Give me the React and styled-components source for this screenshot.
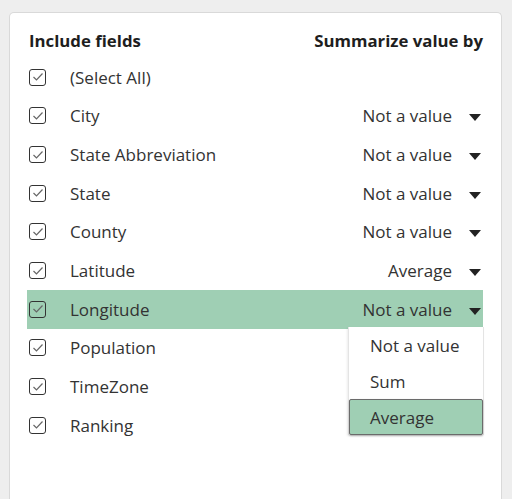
import React from "react";
import styled, { createGlobalStyle } from "styled-components";

const Global = createGlobalStyle`
  html, body { margin: 0; padding: 0; background: #eeeeee; }
  body { font-family: "Open Sans", "Noto Sans", sans-serif; overflow: hidden; }
`;

const GREEN = "#9fcfb4";

const Page = styled.div`
  padding: 12px 10px 0 9px;
  height: 499px;
  box-sizing: border-box;
`;

const Panel = styled.div`
  position: relative;
  background: #fff;
  border: 1px solid #d9d9d9;
  border-bottom: none;
  border-radius: 5px 5px 0 0;
  height: 487px;
  box-sizing: border-box;
  padding: 10px 18px 0 17px;
`;

const Header = styled.div`
  display: flex;
  justify-content: space-between;
  align-items: center;
  height: 35px;
  padding-left: 2px;
  font-weight: 700;
  font-size: 16.8px;
  color: #1e1e1e;
`;

const Row = styled.div`
  display: flex;
  align-items: center;
  height: 38.67px;
  padding-left: 2px;
  background: ${(p) => (p.$active ? GREEN : "transparent")};
  color: #333;
  font-size: 17px;
`;

const Box = styled.span`
  width: 17px;
  height: 17px;
  box-sizing: border-box;
  border: 1.5px solid #333;
  border-radius: 3px;
  display: flex;
  align-items: center;
  justify-content: center;
  flex: none;
`;

const Label = styled.span`
  margin-left: 24px;
`;

const Value = styled.span`
  margin-left: auto;
  display: flex;
  align-items: center;
`;

const Arrow = styled.svg`
  margin-left: 17px;
  margin-right: 2px;
  margin-top: 4px;
`;

const Menu = styled.div`
  position: absolute;
  left: 338px;
  top: 314px;
  width: 134px;
  background: #fff;
  border-left: 1px solid #e4e4e4;
  border-right: 1px solid #e4e4e4;
  box-shadow: -1px 1px 2px rgba(0,0,0,0.08);
`;

const Item = styled.div`
  height: ${(p) => p.$h}px;
  display: flex;
  align-items: center;
  padding-left: 21px;
  font-size: 17px;
  color: #333;
  box-sizing: border-box;
  ${(p) =>
    p.$active &&
    `background: ${GREEN};
     border: 1px solid #6b6b6b;
     border-radius: 2px;
     padding-left: 20px;
     box-shadow: 0 1px 2px rgba(0,0,0,0.3);`}
`;

const Check = () => (
  <Box>
    <svg width="12" height="10" viewBox="0 0 12 10">
      <polyline points="1.5,5 4.5,8 10.5,1.5" fill="none" stroke="#666" strokeWidth="1.2" />
    </svg>
  </Box>
);

const Caret = () => (
  <Arrow width="12" height="7" viewBox="0 0 12 7">
    <polygon points="0,0 12,0 6,7" fill="#222" />
  </Arrow>
);

const fields = [
  ["(Select All)", null],
  ["City", "Not a value"],
  ["State Abbreviation", "Not a value"],
  ["State", "Not a value"],
  ["County", "Not a value"],
  ["Latitude", "Average"],
  ["Longitude", "Not a value", true],
  ["Population", null],
  ["TimeZone", null],
  ["Ranking", null],
];

export default function App() {
  return (
    <Page>
      <Global />
      <Panel>
        <Header>
          <span>Include fields</span>
          <span>Summarize value by</span>
        </Header>
        {fields.map(([name, val, active]) => (
          <Row key={name} $active={active}>
            <Check />
            <Label>{name}</Label>
            {val && (
              <Value>
                {val}
                <Caret />
              </Value>
            )}
          </Row>
        ))}
        <Menu>
          <Item $h={37}>Not a value</Item>
          <Item $h={35}>Sum</Item>
          <Item $h={36} $active>Average</Item>
        </Menu>
      </Panel>
    </Page>
  );
}
